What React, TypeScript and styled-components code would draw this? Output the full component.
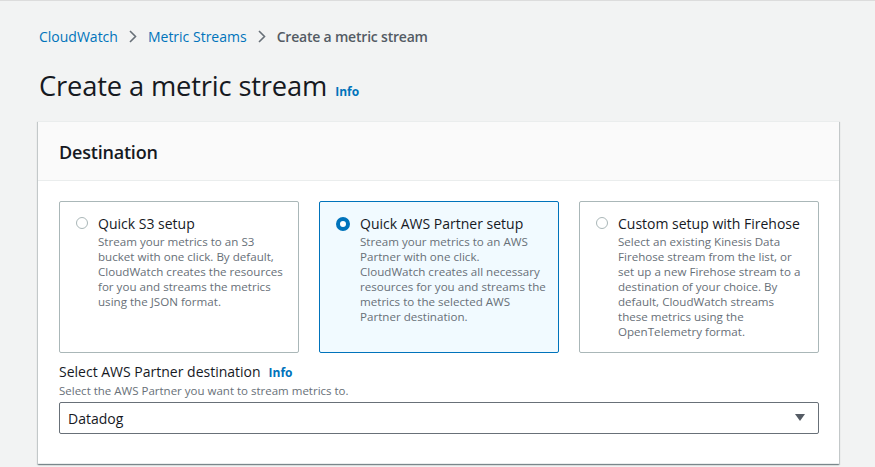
import React, {useState} from "react";
import styled, {createGlobalStyle} from "styled-components";

const GlobalStyle = createGlobalStyle`
  body {
    margin: 0;
    background: #f2f3f3;
    font-family: "Open Sans", "Noto Sans", sans-serif;
    color: #16191f;
  }
`
const Page = styled.div`
  border-top: 1px solid #dcdcdc;
  padding: 25px 36px 0 38px;
  height: 466px;
  box-sizing: border-box;
  overflow: hidden;
`
const Crumbs = styled.nav`
  display: flex;
  align-items: center;
  font-size: 14px;
  height: 20px;
  margin-left: 1px;

  > a {
    color: #0073bb;
    text-decoration: none;
  }

  > .current {
    color: #545b64;
    font-weight: 600;
    letter-spacing: -0.2px;
  }

  > svg {
    margin: 0 11px;
  }
`
const TitleRow = styled.div`
  display: flex;
  align-items: baseline;
  margin: 21px 0 0 1px;
  height: 40px;

  > h1 {
    margin: 0;
    font-size: 27.3px;
    font-weight: 400;
    letter-spacing: -0.15px;
    color: #16191f;
  }
`
const Info = styled.a`
  color: #0073bb;
  font-size: 12px;
  font-weight: 700;
  margin-left: 8px;
  text-decoration: none;
`
const Panel = styled.section`
  margin-top: 14px;
  background: white;
  box-shadow: 0 1px 1px 0 rgba(0, 28, 36, .3), 1px 1px 1px 0 rgba(0, 28, 36, .15), -1px 1px 1px 0 rgba(0, 28, 36, .15);
  border-top: 1px solid #eaeded;
`
const PanelHeader = styled.header`
  background: #fafafa;
  border-bottom: 1px solid #eaeded;
  padding: 18px 21px 16px;

  > h2 {
    margin: 0;
    font-size: 18px;
    font-weight: 600;
    letter-spacing: -0.2px;
    line-height: 24px;
  }
`
const PanelBody = styled.div`
  padding: 20px 20px 29px 21px;
  border-bottom: 1px solid #eaeded;
`
const Tiles = styled.div`
  display: grid;
  grid-template-columns: repeat(3, 240px);
  gap: 20px;
`
const Tile = styled.label<{ $selected: boolean }>`
  display: flex;
  box-sizing: border-box;
  height: 152px;
  padding: 12px 6px 12px 16px;
  gap: 10px;
  border: 1px solid ${p => p.$selected ? '#0073bb' : '#aab7b8'};
  border-radius: 2px;
  background: ${p => p.$selected ? '#f1faff' : 'white'};
  cursor: pointer;
`
const Radio = styled.span<{ $checked: boolean }>`
  flex: none;
  width: ${p => p.$checked ? '14px' : '12px'};
  height: ${p => p.$checked ? '14px' : '12px'};
  margin-top: 3px;
  box-sizing: border-box;
  border-radius: 50%;
  border: ${p => p.$checked ? '4px solid #0073bb' : '1px solid #aab7b8'};
  background: white;
`
const TileTitle = styled.div`
  font-size: 14px;
  line-height: 20px;
  color: #16191f;
`
const DescLine = styled.div`
  height: 15px;
  font-size: 11.6px;
  line-height: 15px;
  white-space: nowrap;
  color: #687078;
`
const Field = styled.div`
  margin-top: 9px;

  > .label {
    font-size: 14px;
    line-height: 20px;
    display: flex;
    align-items: baseline;
  }

  > .desc {
    font-size: 11.5px;
    line-height: 16px;
    color: #687078;
  }
`
const Select = styled.div`
  margin-top: 3px;
  height: 32px;
  box-sizing: border-box;
  border: 1px solid #687078;
  border-radius: 2px;
  display: flex;
  align-items: center;
  justify-content: space-between;
  padding: 0 12px 0 8px;
  font-size: 14px;
`

const tiles = [
    {
        title: 'Quick S3 setup',
        lines: ['Stream your metrics to an S3', 'bucket with one click. By default,', 'CloudWatch creates the resources',
            'for you and streams the metrics', 'using the JSON format.']
    },
    {
        title: 'Quick AWS Partner setup',
        lines: ['Stream your metrics to an AWS', 'Partner with one click.', 'CloudWatch creates all necessary',
            'resources for you and streams the', 'metrics to the selected AWS', 'Partner destination.']
    },
    {
        title: 'Custom setup with Firehose',
        lines: ['Select an existing Kinesis Data', 'Firehose stream from the list, or', 'set up a new Firehose stream to a',
            'destination of your choice. By', 'default, CloudWatch streams', 'these metrics using the', 'OpenTelemetry format.']
    }
]

const Chevron = () => (
    <svg width="8" height="13" viewBox="0 0 8 13">
        <path d="M1 1l5.5 5.5L1 12" fill="none" stroke="#687078" strokeWidth="1.6"/>
    </svg>
)

export default function App() {
    const [selected, setSelected] = useState(1)
    return (
        <Page>
            <GlobalStyle/>
            <Crumbs>
                <a href="#">CloudWatch</a>
                <Chevron/>
                <a href="#">Metric Streams</a>
                <Chevron/>
                <span className="current">Create a metric stream</span>
            </Crumbs>
            <TitleRow>
                <h1>Create a metric stream</h1>
                <Info href="#">Info</Info>
            </TitleRow>
            <Panel>
                <PanelHeader><h2>Destination</h2></PanelHeader>
                <PanelBody>
                    <Tiles>
                        {tiles.map((t, i) => (
                            <Tile key={t.title} $selected={selected === i} onClick={() => setSelected(i)}>
                                <Radio $checked={selected === i}/>
                                <div>
                                    <TileTitle>{t.title}</TileTitle>
                                    {t.lines.map((line, j) => <DescLine key={j}>{line}</DescLine>)}
                                </div>
                            </Tile>
                        ))}
                    </Tiles>
                    <Field>
                        <div className="label">Select AWS Partner destination<Info href="#">Info</Info></div>
                        <div className="desc">Select the AWS Partner you want to stream metrics to.</div>
                        <Select>
                            <span>Datadog</span>
                            <svg width="12" height="8" viewBox="0 0 12 8">
                                <path d="M1 0h10L6 7z" fill="#545b64"/>
                            </svg>
                        </Select>
                    </Field>
                </PanelBody>
            </Panel>
        </Page>
    )
}
